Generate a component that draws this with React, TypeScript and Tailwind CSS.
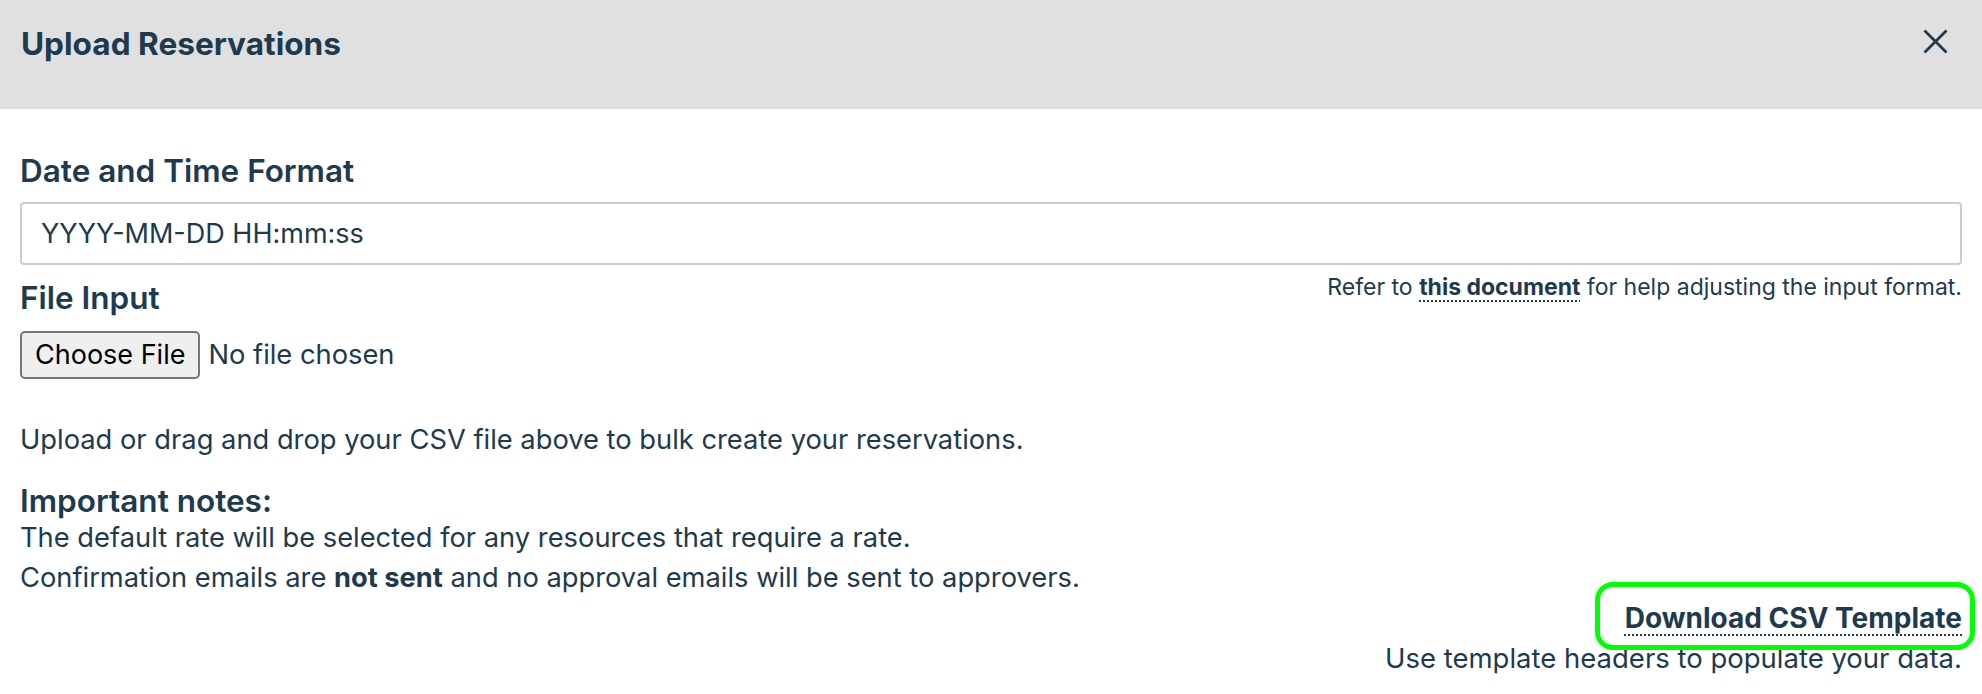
import React from "react";

export default function App() {
  return (
    <div className="w-full bg-white text-[#1e3a4f]" style={{ fontFamily: "Inter, 'Noto Sans', sans-serif" }}>
      <div className="h-[109px] bg-[#e0e0e0] pl-[21px] pr-[34px] pt-[25px] flex items-start justify-between">
        <h1 className="text-[31.6px] font-bold leading-[38px]">Upload Reservations</h1>
        <button className="mt-[4px] w-[25px] h-[25px] text-[#1e3a4f]" aria-label="Close">
          <svg viewBox="0 0 25 25" width="25" height="25" fill="none" stroke="currentColor" strokeWidth="2.8">
            <path d="M1.5 1.5 L23.5 23.5 M23.5 1.5 L1.5 23.5" />
          </svg>
        </button>
      </div>
      <div className="px-[20px] pt-[44px]">
        <div className="text-[31.5px] font-semibold leading-[36px]">Date and Time Format</div>
        <input
          className="mt-[13px] block w-full h-[63px] border-2 border-[#c8ccd8] rounded-[4px] pl-[19px] text-[27px] text-[#1e3a4f] outline-none"
          style={{ fontFamily: "Inter, 'Noto Sans', sans-serif" }}
          defaultValue="YYYY-MM-DD HH:mm:ss"
        />
        <div className="flex items-start justify-between">
          <div className="mt-[15px] text-[31.5px] font-semibold leading-[36px]">File Input</div>
          <div className="mt-[7px] text-[23px] leading-[30px]">
            Refer to{" "}
            <a className="font-bold underline decoration-dotted decoration-[2px] underline-offset-[5px]">this document</a>{" "}
            for help adjusting the input format.
          </div>
        </div>
        <div className="mt-[15px] flex items-center gap-[8px]">
          <button
            className="h-[48px] px-[13px] bg-[#efefef] border-2 border-[#767676] rounded-[5px] text-[27px] text-black"
            style={{ fontFamily: "Inter, 'Noto Sans', sans-serif" }}
          >
            Choose File
          </button>
          <span className="text-[27.3px]">No file chosen</span>
        </div>
        <p className="mt-[41px] text-[27.3px] leading-[39px]">
          Upload or drag and drop your CSV file above to bulk create your reservations.
        </p>
        <div className="mt-[25px] text-[31.5px] font-semibold leading-[34px]">Important notes:</div>
        <p className="text-[27.3px] leading-[40px]">The default rate will be selected for any resources that require a rate.</p>
        <p className="text-[27.3px] leading-[40px]">
          Confirmation emails are <strong className="font-bold">not sent</strong> and no approval emails will be sent to approvers.
        </p>
        <div className="flex flex-col items-end">
          <div className="relative text-[28px] leading-[40px] font-bold">
            <a className="underline decoration-dotted decoration-[2px] underline-offset-[6px]">Download CSV Template</a>
            <span className="absolute -left-[30px] -right-[13px] -top-[16px] -bottom-[12px] border-[5px] border-[#00ff00] rounded-[18px] pointer-events-none"></span>
          </div>
          <div className="text-[27.5px] leading-[40px]">Use template headers to populate your data.</div>
        </div>
      </div>
    </div>
  );
}
